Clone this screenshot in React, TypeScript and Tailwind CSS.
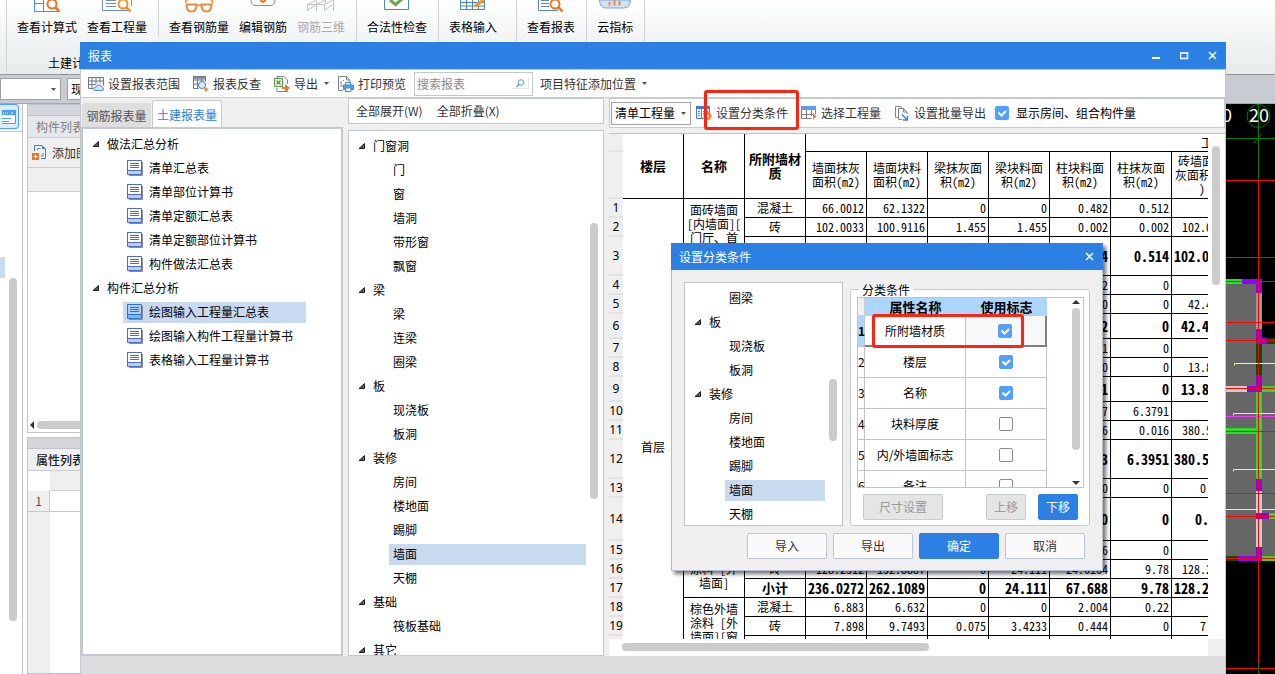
import { useState, type ReactNode } from 'react'
import clsx from 'clsx'

interface TreeNode {
  label: string
  parent?: boolean
}

const REPORT_TREE: TreeNode[] = [
  { label: '做法汇总分析', parent: true },
  { label: '清单汇总表' },
  { label: '清单部位计算书' },
  { label: '清单定额汇总表' },
  { label: '清单定额部位计算书' },
  { label: '构件做法汇总表' },
  { label: '构件汇总分析', parent: true },
  { label: '绘图输入工程量汇总表' },
  { label: '绘图输入构件工程量计算书' },
  { label: '表格输入工程量计算书' },
]

const COMPONENT_TREE: TreeNode[] = [
  { label: '门窗洞', parent: true },
  { label: '门' },
  { label: '窗' },
  { label: '墙洞' },
  { label: '带形窗' },
  { label: '飘窗' },
  { label: '梁', parent: true },
  { label: '梁' },
  { label: '连梁' },
  { label: '圈梁' },
  { label: '板', parent: true },
  { label: '现浇板' },
  { label: '板洞' },
  { label: '装修', parent: true },
  { label: '房间' },
  { label: '楼地面' },
  { label: '踢脚' },
  { label: '墙面' },
  { label: '天棚' },
  { label: '基础', parent: true },
  { label: '筏板基础' },
  { label: '其它', parent: true },
]

const COLUMNS = [
  '墙面抹灰面积(m2)',
  '墙面块料面积(m2)',
  '梁抹灰面积(m2)',
  '梁块料面积(m2)',
  '柱块料面积(m2)',
  '柱抹灰面积(m2)',
  '砖墙面抹灰面积(m2)',
]

interface ReportRow {
  h: string
  material: string
  name?: string
  span?: number
  cells: string[]
}

const H = {
  one: 'h-[19px]',
  mid: 'h-[25px]',
  two: 'h-[39px]',
  tall: 'h-[43px]',
  last: 'h-[60px]',
}

const ROWS: ReportRow[] = [
  { h: H.one, name: '面砖墙面 [内墙面][门厅、首', span: 3, material: '混凝土', cells: ['66.0012', '62.1322', '0', '0', '0.482', '0.512', ''] },
  { h: H.one, material: '砖', cells: ['102.0033', '100.9116', '1.455', '1.455', '0.002', '0.002', '102.0033'] },
  { h: H.two, material: '小计', cells: ['', '', '', '', '0.484', '0.514', '102.0033'] },
  { h: H.one, name: '', span: 3, material: '', cells: ['', '', '', '', '2', '0', ''] },
  { h: H.one, material: '', cells: ['', '', '', '', '0', '0', '42.4125'] },
  { h: H.mid, material: '小计', cells: ['', '', '', '', '2', '0', '42.4125'] },
  { h: H.one, name: '', span: 3, material: '', cells: ['', '', '', '', '1', '0', ''] },
  { h: H.one, material: '', cells: ['', '', '', '', '0', '0', '13.8684'] },
  { h: H.mid, material: '小计', cells: ['', '', '', '', '1', '0', '13.8684'] },
  { h: H.one, name: '', span: 3, material: '', cells: ['', '', '', '', '7', '6.3791', ''] },
  { h: H.one, material: '', cells: ['', '', '', '', '6', '0.016', '380.5316'] },
  { h: H.two, material: '小计', cells: ['', '', '', '', '3', '6.3951', '380.5316'] },
  { h: H.one, name: '', span: 2, material: '', cells: ['', '', '', '', '0', '0', '0.264'] },
  { h: H.tall, material: '小计', cells: ['', '', '', '', '0', '0', '0.264'] },
  { h: H.one, name: '浅色外墙涂料 [外墙面]', span: 3, material: '', cells: ['', '', '', '', '6', '0', ''] },
  { h: H.one, material: '砖', cells: ['128.2312', '132.8887', '0', '24.111', '24.6164', '9.78', '128.2312'] },
  { h: H.one, material: '小计', cells: ['236.0272', '262.1089', '0', '24.111', '67.688', '9.78', '128.2312'] },
  { h: H.one, name: '棕色外墙涂料 [外墙面][窗', span: 3, material: '混凝土', cells: ['6.883', '6.632', '0', '0', '2.004', '0.22', ''] },
  { h: H.one, material: '砖', cells: ['7.898', '9.7493', '0.075', '3.4233', '0.444', '0', '7.898'] },
  { h: H.last, material: '', cells: ['', '', '', '', '', '', ''] },
]

const CONDITIONS = [
  { name: '所附墙材质', on: true },
  { name: '楼层', on: true },
  { name: '名称', on: true },
  { name: '块料厚度', on: false },
  { name: '内/外墙面标志', on: false },
  { name: '备注', on: false },
]

/* ---------- icons ---------- */

function Svg({ w = 16, h = 16, children }: { w?: number; h?: number; children: ReactNode }) {
  return (
    <svg width={w} height={h} viewBox={`0 0 ${w} ${h}`} fill="none" className="shrink-0">
      {children}
    </svg>
  )
}

const Caret = () => (
  <Svg w={5} h={3}>
    <path d="M0 0h5L2.5 3z" fill="#555" />
  </Svg>
)

const TreeArrow = () => (
  <Svg w={7} h={6}>
    <path d="M6.500 .5v5H1z" fill="#555" stroke="#222" />
  </Svg>
)

function SheetIcon({ active }: { active?: boolean }) {
  return (
    <Svg w={16} h={16}>
      <path d="M2 15.5h13.5V2" stroke="#8d8d8d" />
      <path d="M.5.5h14v14H.5z" fill={active ? '#a9d2f8' : '#fff'} stroke={active ? '#2f74c9' : '#4a6cc0'} />
      <path d="M1 10h13v4H1z" fill={active ? '#7db4f2' : '#bccbfb'} />
      <path d="M1 10.5h13M3 3.5h9M3 5.5h9M3 7.5h9" stroke={active ? '#2f74c9' : '#4a6cc0'} />
    </Svg>
  )
}

const RangeIcon = () => (
  <Svg>
    <path d="M.5 1.5h15v8M.5 1.5v11h5M.5 5h15M.5 8.5h7M4 1.5v11M8 1.5v7M12 1.5v6" stroke="#6f7682" />
    <path d="M7 14.5q-2-.5-1-2.500q.5-1 2-1q.5-2 3-2q2.500 0 3 2q1.500.5 1.500 2t-1.500 1.500z" fill="#cfe3fb" stroke="#4a90e2" />
  </Svg>
)

const LookupIcon = () => (
  <Svg>
    <path d="M.5.500h12v5M.5.500v12h5M.5 4h12M.5 8h5M4.500.500v12M8.500.500v5" stroke="#6f7682" />
    <path d="M1 1h11v2H1z" fill="#8b929e" />
    <circle cx="9" cy="9" r="3.500" fill="#dbeafe" stroke="#4a7fd0" />
    <path d="M13 11l2.500 2.500L13 16l-2.500-2.500z" fill="#f29a1f" />
  </Svg>
)

const ExportIcon = () => (
  <Svg>
    <path d="M3 2V.5h7l3.500 3.500v4M13.500 13v2.500H3V12" stroke="#7c838f" />
    <path d="M.5 2.500h8v8h-8z" fill="#fff" stroke="#4f9a3c" />
    <path d="M2.500 4.500l4 4M6.500 4.500l-4 4" stroke="#4f9a3c" strokeWidth="1.500" />
    <path d="M8 11h3V8l5 4-5 3.500V13H8z" fill="#f07c22" />
  </Svg>
)

const PrintIcon = () => (
  <Svg>
    <path d="M5 14.500H.5V.500h8L12 4v3M8.500.500V4H12" stroke="#7c838f" />
    <path d="M2 6h2M2 8h2M2 10h3M5 4.500h1" stroke="#7c838f" />
    <path d="M7.500 9V6.500h5V9" fill="#fff" stroke="#3f86e0" />
    <path d="M5.500 9h10v4.500h-10z" fill="#5a9df0" stroke="#3f86e0" />
    <path d="M7.500 12h5.500v3.500H7.500z" fill="#fff" stroke="#3f86e0" />
  </Svg>
)

const ClassifyIcon = () => (
  <Svg>
    <path d="M.5 1.500h13v12H.5z" fill="#fff" stroke="#3f7fd0" />
    <path d="M0 1h14v3H0z" fill="#3f7fd0" />
    <path d="M5.500 4v9.500M2 6.500h2M2 8.500h2M2 10.500h2M7 6.500h5M7 8.500h3" stroke="#6a7f9c" />
    <circle cx="11.500" cy="11" r="2.800" stroke="#f07c22" strokeWidth="2.400" />
  </Svg>
)

const PickIcon = () => (
  <Svg>
    <path d="M0 1h15v4H0z" fill="#5b9bea" />
    <path d="M.5 5v8.500h10M14.500 5v4M5.500 5v8.500M10.500 5v6M.5 9.500h12" stroke="#79808b" />
    <path d="M12 8l4 4-2 .5-2 2.500z" fill="#f07c22" />
  </Svg>
)

const BatchIcon = () => (
  <Svg>
    <path d="M3.500 12.500h-2V1.500h5L8 3" stroke="#7c838f" />
    <path d="M8 14.500H4.500v-11h5L13 7v2M9.500 3.500V7H13" stroke="#7c838f" />
    <path d="M8 9.500l5 5M13.500 10.500v4.500H9" stroke="#3f86e0" strokeWidth="1.500" />
  </Svg>
)

const AddIcon = () => (
  <Svg>
    <path d="M2.500 6V.500H10L13.500 4v9.500H9" stroke="#3f7fd0" />
    <path d="M10 .5V4h3.500z" fill="#3f7fd0" />
    <path d="M5.500 5.500V3.500h3M11 8v3H9" stroke="#7c838f" />
    <path d="M0 8h7v7H0z" fill="#f07020" />
    <path d="M3.500 9.500v4M1.500 11.500h4" stroke="#fff" />
  </Svg>
)

const Magnifier = ({ x, color }: { x: number; color: string }) => (
  <>
    <circle cx={x} cy="4" r="4.500" fill="#fff" stroke={color} strokeWidth="2" />
    <path d={`M${x + 3} 7l4.500 4.500`} stroke={color} strokeWidth="2.500" />
  </>
)

const RIBBON_ICONS: Record<string, ReactNode> = {
  calc: (
    <Svg w={26} h={13}>
      <path d="M.5 0v11.500H25M9.500 0v11.500M.5 3.500h9" stroke="#4a90d9" />
      <Magnifier x={18} color="#ef7426" />
    </Svg>
  ),
  qty: (
    <Svg w={30} h={13}>
      <path d="M.5 0v10.500H29M29.500 0v6M4 .5h10M4 3.500h10M4 6.500h10" stroke="#6d8fb8" />
      <Magnifier x={21} color="#ef9426" />
    </Svg>
  ),
  glasses: (
    <Svg w={28} h={13}>
      <path d="M.5 3q0-3 2-3M27.500 3q0-3-2-3M11 6q3-2 6 0" stroke="#ef8a3c" strokeWidth="1.500" />
      <path d="M1.500 4.500h10q0 7-5 7t-5-7zM16.500 4.500h10q0 7-5 7t-5-7z" stroke="#ef8a3c" strokeWidth="2" />
    </Svg>
  ),
  cloudEdit: (
    <Svg w={26} h={13}>
      <path d="M1 0q0 5.500 5 5.500h14q5 0 5-5.500" stroke="#868d99" />
      <path d="M10 0l3 2 3-2" stroke="#ef7426" strokeWidth="2" />
    </Svg>
  ),
  truss: (
    <Svg w={28} h={13}>
      <path d="M.5 11V4.500h17V11M9.500 11V1M18.500 4V0M26.500 0v11M.5 4.500L9 0M9.500 4.500L18 0M17.500 4.500L26 0M.5 10l9-5M17.500 10l9-6" stroke="#c3c3c3" />
    </Svg>
  ),
  check: (
    <Svg w={26} h={13}>
      <path d="M.5 0v9.500h24V0" stroke="#4a84c9" />
      <path d="M6 0l5.500 4.500L18 -1" stroke="#6aa84f" strokeWidth="3" />
    </Svg>
  ),
  grid: (
    <Svg w={26} h={13}>
      <path d="M.5 0v9.500h24V0M.5 2.500h24M.5 6h24M6.500 0v9.500M12.500 0v9.500M18.500 0v9.500" stroke="#4a84c9" />
      <path d="M14 7l1-3 7-5 3 2-8 6z" fill="#f09a2c" />
    </Svg>
  ),
  report: (
    <Svg w={26} h={13}>
      <path d="M.5 0v10.500H20M3 .500h8M3 3.500h8M3 6.500h8" stroke="#5b86bd" />
      <Magnifier x={17} color="#ef7426" />
    </Svg>
  ),
  cloud: (
    <Svg w={32} h={13}>
      <path d="M.5 0q0 8 7 8h17q7 0 7-8z" fill="#cfe0f8" stroke="#7ba6df" />
      <path d="M10.500 2v3.500M15.500 0v5.500M20.500 1v4.500" stroke="#ef8a3c" strokeWidth="2" />
    </Svg>
  ),
}

/* ---------- shared pieces ---------- */

function Check({ checked, onChange, label }: { checked: boolean; onChange: () => void; label?: string }) {
  return (
    <span className="grid size-[14px] shrink-0">
      <input
        type="checkbox"
        checked={checked}
        onChange={onChange}
        aria-label={label}
        className="size-[14px] appearance-none rounded-[2px] border border-[#8a8a8a] bg-white [grid-area:1/1] checked:border-[#54a0f8] checked:bg-[#54a0f8]"
      />
      {checked && (
        <span className="pointer-events-none [grid-area:1/1]">
          <Svg w={14} h={14}>
            <path d="M3.500 6.500l3 3 4.500-4.500" stroke="#fff" strokeWidth="2" />
          </Svg>
        </span>
      )}
    </span>
  )
}

interface TreeProps {
  nodes: TreeNode[]
  selected: string
  onSelect: (label: string) => void
  leafEnd: string
  withIcon?: boolean
}

function Tree({ nodes, selected, onSelect, leafEnd, withIcon }: TreeProps) {
  return (
    <ul className="pl-[9px]">
      {nodes.map((node, i) => (
        <li key={i} className="flex h-6 items-center">
          {node.parent ? (
            <button className="flex items-center gap-2">
              <TreeArrow />
              {node.label}
            </button>
          ) : (
            <button
              onClick={() => onSelect(node.label)}
              className={clsx(
                'ml-[31px] flex h-[21px] flex-1 items-center gap-[6px] px-1 text-left',
                leafEnd,
                node.label === selected && 'bg-[#c9d9f0]',
              )}
            >
              {withIcon && <SheetIcon active={node.label === selected} />}
              {node.label}
            </button>
          )}
        </li>
      ))}
    </ul>
  )
}

function ToolButton({ icon, caret, children }: { icon?: ReactNode; caret?: boolean; children: ReactNode }) {
  return (
    <button className="flex shrink-0 items-center gap-1 whitespace-nowrap text-[#333]">
      {icon}
      {children}
      {caret && (
        <span className="-mr-1 pl-[2px]">
          <Caret />
        </span>
      )}
    </button>
  )
}

/* ---------- main window behind the dialogs ---------- */

function RibbonButton({ icon, disabled, children }: { icon: string; disabled?: boolean; children: ReactNode }) {
  return (
    <button className={clsx('flex flex-col items-center gap-[5px]', disabled && 'text-[#aaa]')} disabled={disabled}>
      {RIBBON_ICONS[icon]}
      <span className="leading-[18px]">{children}</span>
    </button>
  )
}

function Ribbon() {
  const group = 'flex items-start gap-[10px] border-r border-[#d0d3d6] pl-[10px]'
  return (
    <header className="flex h-[75px] shrink-0 border-b border-[#8f949b] bg-linear-to-b from-white to-[#e6ebec] pl-[6px]">
      <div className="flex h-[71px] flex-col border-l border-[#d0d3d6]">
        <div className={clsx(group, 'pr-[11px]')}>
          <RibbonButton icon="calc">查看计算式</RibbonButton>
          <RibbonButton icon="qty">查看工程量</RibbonButton>
        </div>
        <span className="mt-[18px] pl-[41px] leading-[18px]">土建计算结果</span>
      </div>
      <div className={clsx(group, 'pr-[11px]')}>
        <RibbonButton icon="glasses">查看钢筋量</RibbonButton>
        <RibbonButton icon="cloudEdit">编辑钢筋</RibbonButton>
        <RibbonButton icon="truss" disabled>
          钢筋三维
        </RibbonButton>
      </div>
      <div className={clsx(group, 'pr-[11px]')}>
        <RibbonButton icon="check">合法性检查</RibbonButton>
      </div>
      <div className={clsx(group, 'pr-[19px]')}>
        <RibbonButton icon="grid">表格输入</RibbonButton>
      </div>
      <div className={clsx(group, 'pr-[11px]')}>
        <RibbonButton icon="report">查看报表</RibbonButton>
      </div>
      <div className={clsx(group, 'pr-[11px]')}>
        <RibbonButton icon="cloud">云指标</RibbonButton>
      </div>
    </header>
  )
}

function SidePanels() {
  return (
    <>
      <nav className="flex w-[23px] shrink-0 flex-col border-r border-[#c0c3cb] bg-white">
        <div className="h-7 border-b border-[#c9ccd2] bg-[#f3f4f6]">
          <button aria-label="构件" className="grid h-[25px] w-[19px] place-items-center rounded-r border border-l-0 border-[#4d9df7] bg-[#dcecff]">
            <Svg w={15} h={14}>
              <path d="M-1 .5h14.500v13H-1z" fill="#fff" stroke="#4d9df7" />
              <path d="M0 1h13v4H0z" fill="#4d9df7" />
              <path d="M0 8.500h9M0 11.500h7" stroke="#4d9df7" />
              <path d="M1 3h1M3 3h1M5 3h1M9 3h2" stroke="#fff" />
            </Svg>
          </button>
        </div>
        <div className="mt-[125px] h-[21px] w-[5px] bg-[#c9d9f0]" />
        <div className="ml-[9px] h-[343px] w-2 rounded-full bg-[#cbcbcb]" />
      </nav>
      <div className="ml-1 flex w-60 shrink-0 flex-col gap-1">
        <section className="flex h-[329px] shrink-0 flex-col border border-[#c0c3cb] bg-white">
          <div className="h-[11px] border-b border-[#c0c3cb] bg-[#d3d5db]" />
          <h2 className="h-[22px] border-b border-[#c9ccd2] bg-[#e6e7ea] pl-2 leading-[22px] text-[#808080]">构件列表</h2>
          <div className="flex h-[30px] items-center border-b border-[#c9ccd2] bg-[#efefef] pl-1">
            <ToolButton icon={<AddIcon />}>添加图元</ToolButton>
          </div>
          <div className="h-6 border-b border-[#c9ccd2] bg-[#efefef]" />
          <div className="mt-auto flex h-[14px] items-center gap-[3px] pl-[2px]">
            <Svg w={4} h={8}>
              <path d="M4 0v8L0 4z" fill="#333" />
            </Svg>
            <div className="h-2 flex-1 rounded-full bg-[#cbcbcb]" />
          </div>
        </section>
        <section className="flex flex-1 flex-col border border-[#c0c3cb] bg-white">
          <div className="h-[11px] shrink-0 border-b border-[#c0c3cb] bg-[#d3d5db]" />
          <h2 className="h-[22px] shrink-0 border-b border-[#c9ccd2] bg-[#efefef] pl-2 font-medium leading-[22px] text-[#222]">
            属性列表
          </h2>
          <div className="flex h-5 shrink-0">
            <div className="w-[22px]" />
            <div className="flex-1 border-b border-[#d3d3d3] bg-[#efefef]" />
          </div>
          <div className="flex h-[21px] shrink-0 border-b border-[#c9c9c9]">
            <div className="w-[22px] border-r border-[#c9c9c9] bg-[#efefef] text-center leading-5 text-[#555]">1</div>
          </div>
          <div className="w-[22px] flex-1 bg-[#efefef]" />
        </section>
      </div>
    </>
  )
}

function DrawingCanvas() {
  const red = [76, 153, 177, 218, 236, 284, 327, 389, 412, 454, 564]
  return (
    <div className="ml-auto w-[49px] shrink-0 bg-black">
      <svg width="49" height="570" viewBox="0 0 49 570" fill="none">
        <path d="M0 177h33v58h16v222H0z" fill="#666" />
        <path d="M0 175h16v5H0zM30 288h6v87h-6zM0 324h30v6H0zM36 282h13v6H36zM43 409h6v6h-6zM36 452h13v5H36z" fill="#2bdc2b" />
        <path d="M41 234h8v6h-8zM30 240h6v31h-6zM0 452h12v5H0z" fill="#055005" />
        <path d="M30 189h6v36h-6z" fill="#999" />
        <path d="M0 282h21v6H0zM30 387h6v56h-6z" fill="#ccc" />
        <path
          d="M16 175h20v14h-6v-9H16zM30 225h6v9h5v6H30zM30 271h6v17H21v-6h9zM30 375h6v12h-6zM30 409h13v6H30zM30 443h6v14H12v-5h18z"
          fill="#8b00ff"
        />
        <path d="M49 259.500H8.500v2M49 309.500H7.500v2M49 365.500H7.500v2M49 405.500H0" stroke="#ffff33" />
        <path d="M0 312.500h49" stroke="#ff33ff" />
        {red.map((y) => (
          <path key={y} d={`M0 ${y}.5h49`} stroke="#ff0000" />
        ))}
        <path d="M32.500 76v484" stroke="#ff0000" />
        <path d="M32.500 0v76M0 34.500h49M28 39l8-9M32.500 560v10" stroke="#008000" />
        <circle cx="32.500" cy="12" r="11.500" stroke="#008000" />
        <text x="23" y="18" fill="#fff" fontSize="18" fontFamily="Noto Sans CJK SC">
          20
        </text>
        <text x="-4" y="18" fill="#fff" fontSize="18" fontFamily="Noto Sans CJK SC">
          0
        </text>
      </svg>
    </div>
  )
}

/* ---------- report table ---------- */

function ReportTable() {
  const cell = 'border-r border-b border-black px-[2px]'
  const gutter = 'border-b-2 border-[#e2e2e2] bg-[#efefef] p-0 text-center font-sans font-normal'
  return (
    <table className="w-[563px] table-fixed border-separate border-spacing-0 [line-break:anywhere] text-black leading-[14px] font-['Noto_Sans_Mono_CJK_SC','Noto_Sans_CJK_SC',monospace]">
      <colgroup>
        <col className="w-[14px]" />
        {Array.from({ length: 10 }, (_, i) => (
          <col key={i} className="w-[61px]" />
        ))}
      </colgroup>
      <thead>
        <tr className="h-[18px]">
          <th className={gutter} />
          {['楼层', '名称', '所附墙材质'].map((h) => (
            <th key={h} rowSpan={2} className={clsx(cell, 'text-[13px] leading-[14px] font-bold')}>
              {h}
            </th>
          ))}
          <th colSpan={7} className="border-b border-black pr-2 text-right font-normal">
            工程
          </th>
        </tr>
        <tr className="h-[47px]">
          <th className={gutter} />
          {COLUMNS.map((c) => (
            <th key={c} className={clsx(cell, 'font-normal')}>
              {c}
            </th>
          ))}
        </tr>
      </thead>
      <tbody>
        {ROWS.map((row, i) => {
          const sum = row.material === '小计'
          return (
            <tr key={i} className={row.h}>
              <th className={gutter}>
                <div className="-mx-1 whitespace-nowrap">{i + 1}</div>
              </th>
              {i === 0 && (
                <td rowSpan={ROWS.length} className={clsx(cell, 'text-center')}>
                  首层
                </td>
              )}
              {row.span && (
                <td rowSpan={row.span} className={clsx(cell, 'py-1 text-center', i === 14 ? 'align-middle' : 'align-top')}>
                  {row.name}
                </td>
              )}
              <td className={clsx(cell, 'py-0 text-center', sum && 'text-[13px] leading-[14px] font-bold')}>{row.material}</td>
              {row.cells.map((v, c) => (
                <td
                  key={c}
                  className={clsx(
                    'border-r border-b border-black py-0 pr-[2px] text-right whitespace-nowrap',
                    sum && 'text-[14px] leading-[14px] font-bold',
                  )}
                >
                  {v}
                </td>
              ))}
            </tr>
          )
        })}
      </tbody>
    </table>
  )
}

/* ---------- condition dialog ---------- */

function ConditionDialog() {
  const [flags, setFlags] = useState(CONDITIONS.map((c) => c.on))
  const [selected, setSelected] = useState('墙面')
  const toggle = (i: number) => setFlags((f) => f.map((v, n) => (n === i ? !v : v)))

  const button = 'h-[26px] rounded-[2px] border'
  const plain = 'border-[#bcc5d4] bg-[#fafafa] text-[#333]'
  const primary = 'border-[#2d80e3] bg-[#2d80e3] text-white'
  const off = 'border-[#c6cad2] bg-[#e5e5e5] text-[#999]'

  return (
    <section
      role="dialog"
      aria-label="设置分类条件"
      className="absolute top-[201px] left-[590px] w-[432px] border border-t-0 border-[#b4bfd3] bg-[#efefef] shadow-[3px_3px_4px_rgba(0,0,0,0.55)]"
    >
      <header className="-mx-px flex h-[27px] items-center justify-between bg-[#2d80e3] pr-[9px] pl-2 text-white">
        <h2>设置分类条件</h2>
        <button aria-label="关闭">
          <Svg w={9} h={9}>
            <path d="M1 1l7 7M8 1L1 8" stroke="#fff" strokeWidth="1.500" />
          </Svg>
        </button>
      </header>

      <div className="flex gap-[7px] px-3 pt-3">
        <div className="relative h-[244px] w-[159px] shrink-0 overflow-hidden border border-[#c0c3cb] bg-white pt-[3px]">
          <Tree nodes={COMPONENT_TREE.slice(9, 19)} selected={selected} onSelect={setSelected} leafEnd="mr-[17px]" />
          <div className="absolute top-24 right-[5px] h-[62px] w-2 rounded-full bg-[#cbcbcb]" />
        </div>

        <fieldset className="h-[244px] min-w-0 flex-1 rounded-[3px] border border-[#c6cad2] bg-white pr-[5px] pl-[6px]">
          <legend className="ml-[2px] px-[3px] leading-[15px]">分类条件</legend>
          <div className="flex h-[191px] overflow-hidden border border-[#c0c3cb]">
            <table className="h-fit w-[189px] table-fixed border-separate border-spacing-0 text-center text-black">
              <colgroup>
                <col className="w-[7px]" />
                <col className="w-[101px]" />
                <col className="w-[81px]" />
              </colgroup>
              <thead>
                <tr className="h-[18px] text-[13px] leading-[17px]">
                  <th className="border-r border-b border-[#c6cad2] bg-[#f0f0f0] p-0" />
                  <th className="border-b border-[#c6cad2] bg-[#add6fe] p-0 font-bold">属性名称</th>
                  <th className="border-b border-[#c6cad2] bg-[#add6fe] p-0 font-bold">使用标志</th>
                </tr>
              </thead>
              <tbody>
                {CONDITIONS.map((c, i) => (
                  <tr key={c.name} className="h-[31px]">
                    <th
                      className={clsx(
                        'border-r border-b border-[#c0c3cb] p-0',
                        i === 0 ? 'bg-[#add6fe] font-bold' : 'font-normal',
                      )}
                    >
                      {i + 1}
                    </th>
                    <td className={clsx('border-r border-b border-[#c0c3cb] p-0', i === 0 && 'border-b-2 border-b-[#808080]')}>
                      {c.name}
                    </td>
                    <td
                      className={clsx(
                        'border-r border-b border-[#c0c3cb] p-0',
                        i === 0 && 'border-r-2 border-b-2 border-r-[#808080] border-b-[#808080] bg-[#f7f8fa]',
                      )}
                    >
                      <div className="flex justify-center pr-px">
                        <Check checked={flags[i]} onChange={() => toggle(i)} label={c.name} />
                      </div>
                    </td>
                  </tr>
                ))}
              </tbody>
            </table>
            <div className="ml-auto flex w-[14px] flex-col items-center gap-1 py-[2px]">
              <Svg w={8} h={4}>
                <path d="M4 0l4 4H0z" fill="#333" />
              </Svg>
              <div className="h-[142px] w-2 rounded-full bg-[#cbcbcb]" />
              <div className="mt-auto">
                <Svg w={8} h={4}>
                  <path d="M0 0h8L4 4z" fill="#333" />
                </Svg>
              </div>
            </div>
          </div>
          <div className="mt-[6px] flex items-center gap-3 px-[6px]">
            <button disabled className={clsx(button, off, 'mr-auto w-20')}>
              尺寸设置
            </button>
            <button disabled className={clsx(button, off, 'w-10')}>
              上移
            </button>
            <button className={clsx(button, primary, 'w-10')}>下移</button>
          </div>
        </fieldset>
      </div>

      <footer className="flex justify-end gap-[6px] pt-[7px] pr-[17px] pb-[11px]">
        <button className={clsx(button, plain, 'w-20')}>导入</button>
        <button className={clsx(button, plain, 'w-20')}>导出</button>
        <button className={clsx(button, primary, 'w-20')}>确定</button>
        <button className={clsx(button, plain, 'w-20')}>取消</button>
      </footer>

      {/* callout around the first condition */}
      <div className="pointer-events-none absolute top-[71px] left-[200px] h-[34px] w-[152px] rounded-[3px] border-3 border-[#ff2412]" />
    </section>
  )
}

/* ---------- report dialog ---------- */

function ReportDialog() {
  const [report, setReport] = useState('绘图输入工程量汇总表')
  const [component, setComponent] = useState('墙面')
  const [showRooms, setShowRooms] = useState(true)

  return (
    <section
      role="dialog"
      aria-label="报表"
      className="absolute top-[42px] right-[49px] bottom-0 left-[80px] flex flex-col border-x border-[#c2c8d4] bg-[#efefef]"
    >
      <header className="-mx-px flex h-[27px] shrink-0 items-center bg-[#2d80e3] pr-[9px] pl-2 text-white">
        <h1>报表</h1>
        <div className="ml-auto flex gap-[19px]">
          <button aria-label="最小化">
            <Svg w={9} h={9}>
              <path d="M0 7h8" stroke="#fff" strokeWidth="2" />
            </Svg>
          </button>
          <button aria-label="最大化">
            <Svg w={9} h={9}>
              <path d="M.5 1v6.500h7V1M0 2h8" stroke="#fff" strokeWidth="1.500" />
            </Svg>
          </button>
          <button aria-label="关闭">
            <Svg w={9} h={9}>
              <path d="M1 1l7 7M8 1L1 8" stroke="#fff" strokeWidth="1.500" />
            </Svg>
          </button>
        </div>
      </header>

      <div className="flex h-[29px] shrink-0 items-center gap-[13px] border-y border-[#c6cad2] bg-white pl-[7px]">
        <ToolButton icon={<RangeIcon />}>设置报表范围</ToolButton>
        <ToolButton icon={<LookupIcon />}>报表反查</ToolButton>
        <ToolButton icon={<ExportIcon />} caret>
          导出
        </ToolButton>
        <ToolButton icon={<PrintIcon />}>打印预览</ToolButton>
        <div className="-mr-[6px] -ml-[5px] flex h-6 w-[119px] items-center border border-[#c3c6cb] pr-[3px]">
          <input aria-label="搜索报表" placeholder="搜索报表" className="w-full min-w-0 pl-[2px] outline-none placeholder:text-[#8a8a8a]" />
          <button aria-label="搜索" className="grid h-[11px] w-4 shrink-0 place-items-center border-r border-b border-[#e6e6e6]">
            <Svg w={9} h={9}>
              <circle cx="5" cy="3.500" r="2.800" stroke="#4a9be8" />
              <path d="M3 5.500L.5 8" stroke="#4a9be8" strokeWidth="1.500" />
            </Svg>
          </button>
        </div>
        <ToolButton caret>项目特征添加位置</ToolButton>
      </div>

      <div className="flex min-h-0 flex-1 gap-[5px]">
        <div className="flex w-[262px] shrink-0 flex-col">
          <div className="flex h-[29px] shrink-0 items-end gap-px pl-px">
            <button className="h-6 w-[69px] rounded-t-[3px] bg-[#dedede] pt-px text-[#555]">钢筋报表量</button>
            <button className="h-[27px] w-[70px] rounded-t-[3px] border border-b-0 border-[#c6cad2] bg-white pt-px text-[#2d80e3]">
              土建报表量
            </button>
          </div>
          <div className="min-h-0 flex-1 overflow-hidden border-2 border-[#c2c8d0] bg-white pt-[3px]">
            <Tree nodes={REPORT_TREE} selected={report} onSelect={setReport} leafEnd="mr-[35px]" withIcon />
          </div>
        </div>

        <div className="flex w-64 shrink-0 flex-col gap-[6px]">
          <div className="flex h-[26px] shrink-0 items-center gap-[14px] border border-[#c6cad2] bg-white pl-[7px]">
            <ToolButton>全部展开(W)</ToolButton>
            <ToolButton>全部折叠(X)</ToolButton>
          </div>
          <div className="relative min-h-0 flex-1 overflow-hidden border border-[#c6cad2] bg-white pt-[3px]">
            <Tree nodes={COMPONENT_TREE} selected={component} onSelect={setComponent} leafEnd="mr-[17px]" />
            <div className="absolute top-[92px] right-[5px] h-[276px] w-2 rounded-full bg-[#cbcbcb]" />
          </div>
        </div>

        <div className="flex min-w-0 flex-1 flex-col gap-[5px]">
          <div className="relative flex h-[30px] shrink-0 items-center border border-[#c6cad2] bg-white pl-px">
            <div className="relative flex w-20 items-center">
              <select
                aria-label="工程量类型"
                className="h-[23px] w-full appearance-none border border-[#a0a0a0] bg-white pl-[3px] text-black"
              >
                <option>清单工程量</option>
              </select>
              <span className="pointer-events-none absolute right-[5px]">
                <Caret />
              </span>
            </div>
            <div className="ml-[5px] flex items-center gap-[13px]">
              <ToolButton icon={<ClassifyIcon />}>设置分类条件</ToolButton>
              <ToolButton icon={<PickIcon />}>选择工程量</ToolButton>
              <ToolButton icon={<BatchIcon />}>设置批量导出</ToolButton>
            </div>
            <label className="ml-[9px] flex items-center gap-[7px] whitespace-nowrap text-black">
              <Check checked={showRooms} onChange={() => setShowRooms(!showRooms)} />
              显示房间、组合构件量
            </label>
            {/* callout around the classification button */}
            <div className="pointer-events-none absolute top-[-9px] left-[94px] h-10 w-[95px] rounded-[3px] border-3 border-[#ff2412]" />
          </div>

          <div className="flex min-h-0 flex-1 flex-col border-t border-[#c3c3c3] bg-white">
            <div className="flex min-h-0 flex-1">
              <div className="min-w-0 flex-1 overflow-hidden">
                <ReportTable />
              </div>
              <div className="w-[17px] shrink-0 pt-3 pl-1">
                <div className="h-[139px] w-2 rounded-full bg-[#cbcbcb]" />
              </div>
            </div>
            <div className="flex h-[17px] shrink-0 pl-[13px]">
              <div className="mt-1 h-2 w-[307px] rounded-full bg-[#cbcbcb]" />
              <div className="ml-auto w-[17px] bg-[#efefef]" />
            </div>
          </div>
        </div>
      </div>
      <footer className="h-[18px] shrink-0 bg-[#dddde0]" />

      <ConditionDialog />
    </section>
  )
}

export default function App() {
  return (
    <div className="relative flex h-screen flex-col overflow-hidden bg-white text-[12px] leading-4 text-black font-['Noto_Sans_CJK_SC',sans-serif]">
      <Ribbon />
      <div className="flex h-[29px] shrink-0 items-center gap-[6px] border-b border-[#a4a8ae] bg-[#c8ccd2]">
        <div className="flex h-[22px] w-[61px] items-center justify-end border border-[#a0a0a0] bg-white pr-1">
          <Caret />
        </div>
        <div className="flex h-[22px] w-24 items-center border border-[#a0a0a0] bg-white pl-[3px]">现浇板</div>
      </div>
      <div className="flex min-h-0 flex-1">
        <SidePanels />
        <DrawingCanvas />
      </div>
      <ReportDialog />
    </div>
  )
}
